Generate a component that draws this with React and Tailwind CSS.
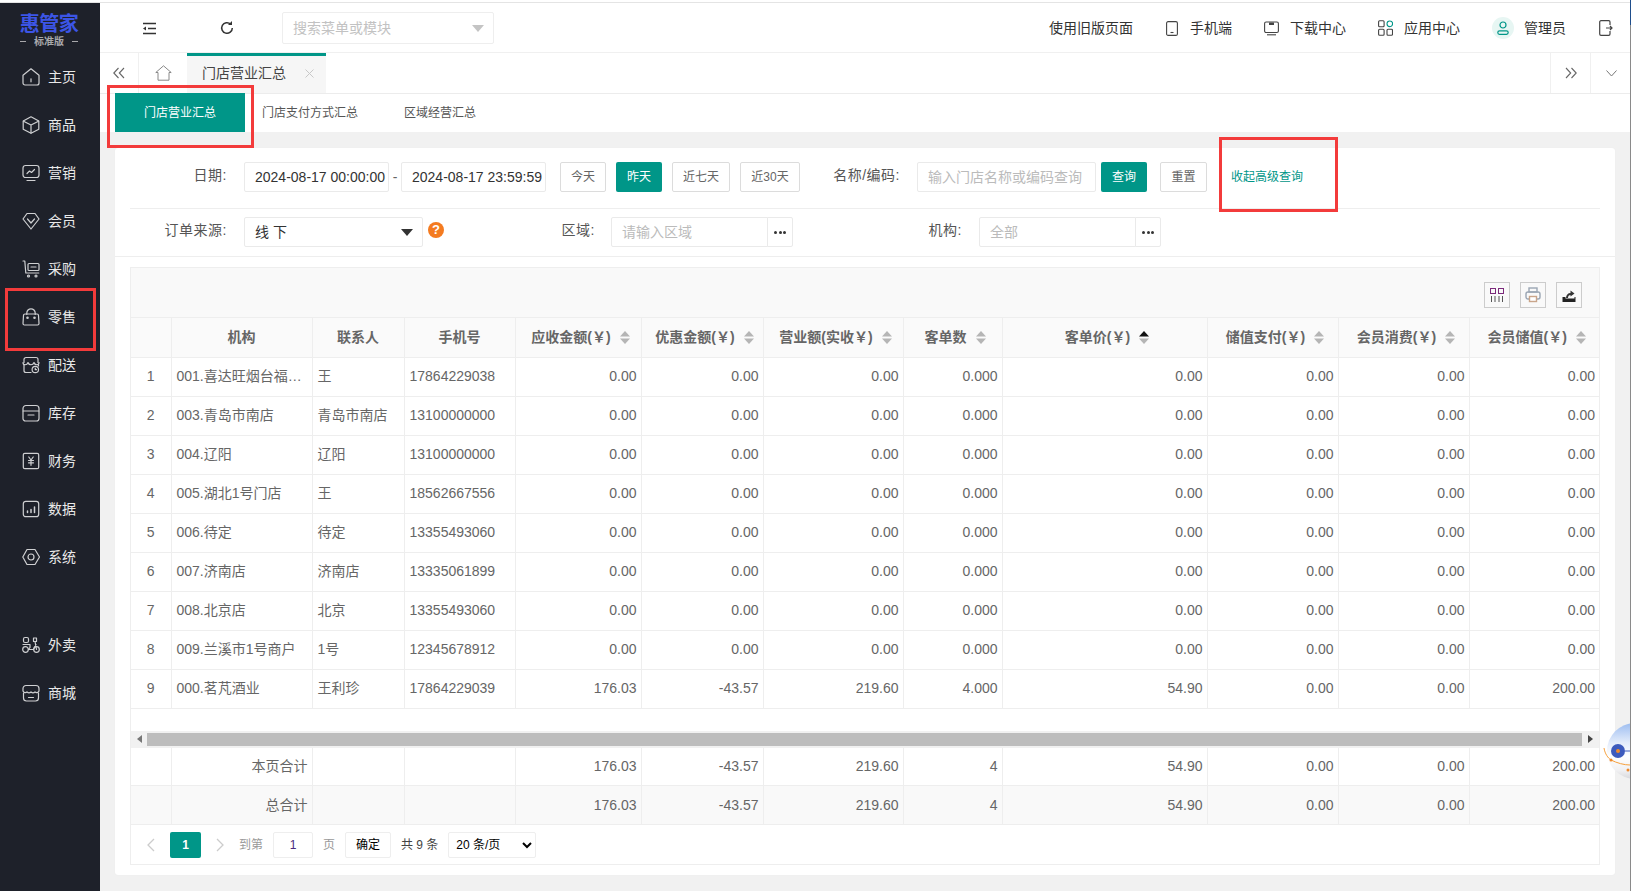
import React from "react";

const s = { fill: "none", stroke: "currentColor", strokeWidth: 1.2, strokeLinecap: "round", strokeLinejoin: "round" };
const Ic = ({ size = 18, vb = 18, className = "", children }) => (
  <svg width={size} height={size} viewBox={`0 0 ${vb} ${vb}`} className={className} {...s}>{children}</svg>
);

const navIcons = {
  home: <><path d="M1 7.300 9 .8l8 6.500v7.700a2 2 0 0 1-2 2H3a2 2 0 0 1-2-2z" /><path d="M9 10.800v3" /></>,
  box: <><path d="M9 .8 16.800 5v8.200L9 17.300 1.200 13.200V5z" /><path d="M1.500 5.200 9 9l7.500-3.800M9 9v8" /></>,
  chart: <><rect x="1" y="1.500" width="16" height="12" rx="2.500" /><path d="m5 9.500 2.500-2.500 2 1.500 3-3M5 16.500h8" /></>,
  member: <><path d="M5 1.500h8l4 5.500-8 10L1 7z" /><path d="m5.500 7 3.500 4 3.500-4" /></>,
  cart: <><path d="M1 1h1.800l1 12h13" /><rect x="6" y="3.500" width="11" height="7" rx="1" /><path d="M9 7h5" /><circle cx="6.500" cy="16" r="1" /><circle cx="14" cy="16" r="1" /></>,
  bag: <><path d="M3 6h12a1.500 1.500 0 0 1 1.500 1.500l.5 8a1.500 1.500 0 0 1-1.500 1.500h-13A1.500 1.500 0 0 1 1 15.500l.5-8A1.500 1.500 0 0 1 3 6z" /><path d="M4.800 6.500V5a4.200 4.200 0 0 1 8.400 0v1.500" /><circle cx="5.500" cy="9.800" r=".7" /><circle cx="12.500" cy="9.800" r=".7" /></>,
  ship: <><path d="M2 6.500V3.500A2 2 0 0 1 4 1.500h10a2 2 0 0 1 2 2v3" /><path d="M1 6.500c0 3 4 3 5 0 .8 3 5 3 6 0 .8 3 5 3 5 0" /><path d="M2 9v5.500a2 2 0 0 0 2 2h5" /><path d="M16.500 9v1" /><circle cx="13.300" cy="13.500" r="3.200" /><path d="M13.300 12.200v1.500h1.200" /></>,
  stock: <><path d="M4 1.500h10a3 3 0 0 1 3 3v10a2.500 2.500 0 0 1-2.500 2.500h-11A2.500 2.500 0 0 1 1 14.500v-10a3 3 0 0 1 3-3z" /><path d="M1.200 7h15.600M6 11h6" /></>,
  money: <><rect x="1.300" y="1.300" width="15.400" height="15.400" rx="1.500" /><path d="m6.800 5 2.200 3 2.200-3M6.500 8.500h5M6.500 10.800h5M9 8.300v5" /></>,
  data: <><rect x="1.300" y="1.300" width="15.400" height="15.400" rx="2.500" /><path d="M5.500 12.500v-1.500M9 12.500V9.500M12.500 12.500V7" strokeWidth="1.500" /></>,
  sys: <><path d="M5 1.500h8l4.500 7.500-4.500 7.500H5L.8 9z" /><circle cx="9" cy="9" r="3" /></>,
  bike: <><circle cx="3.500" cy="13.500" r="2.800" /><circle cx="14.500" cy="13.500" r="2.800" /><rect x="1.500" y="1.500" width="5" height="5" rx="1.500" /><path d="M1 8.500h7v3l-1.500 2h5l2.500-5M11.500 2h3v3.500h-3zM13 5.500l1.500 8" /></>,
  mall: <><path d="M4 1.500h10a3 3 0 0 1 3 3V7a2.500 2.500 0 0 1-4 1 3 3 0 0 1-4 0 3 3 0 0 1-4 0 2.500 2.500 0 0 1-4-1V4.500a3 3 0 0 1 3-3z" /><path d="M1.500 9v5a3 3 0 0 0 3 3h9a3 3 0 0 0 3-3V9M6.500 13.500h5" /></>,
};

const NavItem = ({ icon, label }) => (
  <div className="h-12 flex items-center pl-[22px] text-[14px] text-[#e9e9e9] shrink-0">
    <span className="w-[26px] text-[#cfd0d2] flex"><Ic>{navIcons[icon]}</Ic></span>
    <span>{label}</span>
  </div>
);

const Sort = ({ up }) => (
  <svg width="10" height="13" viewBox="0 0 10 13" className="shrink-0">
    <path d="M5 0 10 5.500H0z" fill={up ? "#111" : "#b5b5b5"} />
    <path d="M5 13 0 7.500h10z" fill="#b5b5b5" />
  </svg>
);

const rows = [
  ["1", "001.喜达旺烟台福…", "王", "17864229038", "0.00", "0.00", "0.00", "0.000", "0.00", "0.00", "0.00", "0.00"],
  ["2", "003.青岛市南店", "青岛市南店", "13100000000", "0.00", "0.00", "0.00", "0.000", "0.00", "0.00", "0.00", "0.00"],
  ["3", "004.辽阳", "辽阳", "13100000000", "0.00", "0.00", "0.00", "0.000", "0.00", "0.00", "0.00", "0.00"],
  ["4", "005.湖北1号门店", "王", "18562667556", "0.00", "0.00", "0.00", "0.000", "0.00", "0.00", "0.00", "0.00"],
  ["5", "006.待定", "待定", "13355493060", "0.00", "0.00", "0.00", "0.000", "0.00", "0.00", "0.00", "0.00"],
  ["6", "007.济南店", "济南店", "13335061899", "0.00", "0.00", "0.00", "0.000", "0.00", "0.00", "0.00", "0.00"],
  ["7", "008.北京店", "北京", "13355493060", "0.00", "0.00", "0.00", "0.000", "0.00", "0.00", "0.00", "0.00"],
  ["8", "009.兰溪市1号商户", "1号", "12345678912", "0.00", "0.00", "0.00", "0.000", "0.00", "0.00", "0.00", "0.00"],
  ["9", "000.茗芃酒业", "王利珍", "17864229039", "176.03", "-43.57", "219.60", "4.000", "54.90", "0.00", "0.00", "200.00"],
];

const heads = [
  ["", false], ["机构", false], ["联系人", false], ["手机号", false],
  ["应收金额(￥)", true], ["优惠金额(￥)", true], ["营业额(实收￥)", true], ["客单数", true],
  ["客单价(￥)", "up"], ["储值支付(￥)", true], ["会员消费(￥)", true], ["会员储值(￥)", true],
];

const Cols = () => (
  <colgroup>
    <col className="w-[40px]" /><col className="w-[141px]" /><col className="w-[92px]" /><col className="w-[111px]" />
    <col className="w-[126px]" /><col className="w-[122px]" /><col className="w-[140px]" /><col className="w-[99px]" />
    <col className="w-[205px]" /><col className="w-[131px]" /><col className="w-[131px]" /><col className="w-[130px]" />
  </colgroup>
);

const Btn = ({ w, children, active }) => (
  <div className={`${w} h-[30px] shrink-0 flex items-center justify-center rounded-[2px] text-[12px] ${active ? "bg-[#009688] text-white" : "border border-[#dcdcdc] text-[#666] bg-white"}`}>
    {children}
  </div>
);

const Field = ({ w, children, muted }) => (
  <div className={`${w} h-[30px] shrink-0 flex items-center pl-[10px] border border-[#eaeaea] rounded-[2px] text-[14px] bg-white ${muted ? "text-[#bbb]" : "text-[#333]"}`}>
    {children}
  </div>
);

const Label = ({ w, children }) => (
  <div className={`${w} h-[26px] flex items-center justify-end text-[#555] whitespace-nowrap tracking-[0.5px]`}>{children}</div>
);

const Dots = () => (
  <div className="w-[26px] h-[30px] -ml-px shrink-0 flex items-center justify-center border border-[#eaeaea] rounded-r-[2px] bg-white gap-[1.500px]">
    <i className="w-[3px] h-[3px] rounded-full bg-[#333]" /><i className="w-[3px] h-[3px] rounded-full bg-[#333]" /><i className="w-[3px] h-[3px] rounded-full bg-[#333]" />
  </div>
);

const Tool = ({ children }) => (
  <div className="w-[26px] h-[26px] border border-[#ccc] flex items-center justify-center">{children}</div>
);

export default function App() {
  return (
    <div className="relative w-[1631px] h-[891px] overflow-hidden bg-white font-['Liberation_Sans','Noto_Sans_CJK_SC',sans-serif]">
      <div className="h-[3px] border-b border-[#e4e4e4] bg-white" />
      <div className="flex h-[888px]">
        {/* Sidebar */}
        <aside className="w-[100px] shrink-0 bg-[#1e212a] flex flex-col">
          <div className="h-[50px] flex flex-col items-center pt-[10px] pr-[2px]">
            <div className="text-[20px] leading-[22px] font-bold text-[#3c55e6] tracking-[-0.5px]">惠管家</div>
            <div className="flex items-center gap-[8px] text-[10px] leading-[13px] text-[#a8a8ab] font-bold">
              <i className="w-[6px] h-px bg-[#a8a8ab]" />标准版<i className="w-[6px] h-px bg-[#a8a8ab]" />
            </div>
          </div>
          <NavItem icon="home" label="主页" />
          <NavItem icon="box" label="商品" />
          <NavItem icon="chart" label="营销" />
          <NavItem icon="member" label="会员" />
          <NavItem icon="cart" label="采购" />
          <NavItem icon="bag" label="零售" />
          <NavItem icon="ship" label="配送" />
          <NavItem icon="stock" label="库存" />
          <NavItem icon="money" label="财务" />
          <NavItem icon="data" label="数据" />
          <NavItem icon="sys" label="系统" />
          <div className="h-10" />
          <NavItem icon="bike" label="外卖" />
          <NavItem icon="mall" label="商城" />
        </aside>

        <main className="flex-1 min-w-0 flex flex-col bg-[#f1f1f1]">
          {/* Top bar */}
          <header className="h-[50px] shrink-0 bg-white border-b border-[#f0f0f0] pt-px flex items-center text-[14px] text-[#333]">
            <span className="ml-[42px] w-[16px] flex text-[#333]">
              <svg width="15" height="13" viewBox="0 0 15 13" fill="none" stroke="currentColor" strokeWidth="1.300"><path d="M1 1.500h13M6 6.500h8M1 11.500h13" /><path d="M4 4.500 1 6.500l3 2z" fill="currentColor" stroke="none" /></svg>
            </span>
            <span className="ml-[62px] w-[14px] flex text-[#333]">
              <svg width="14" height="14" viewBox="0 0 14 14" fill="none" stroke="currentColor" strokeWidth="1.500"><path d="M12.300 7a5.300 5.300 0 1 1-1.700-3.900" /><path d="M12 0v4H8z" fill="currentColor" stroke="none" /></svg>
            </span>
            <div className="ml-[48px] w-[212px] h-[32px] border border-[#eee] rounded-[2px] flex items-center pl-[10px] pr-[9px] text-[#c2c2c2] justify-between">
              <span>搜索菜单或模块</span>
              <svg width="12" height="7" viewBox="0 0 12 7"><path d="M0 0h12L6 7z" fill="#c4c4c4" /></svg>
            </div>
            <span className="ml-[555px] w-[84px] whitespace-nowrap">使用旧版页面</span>
            <span className="ml-[33px] w-[12px] flex text-[#444]">
              <svg width="12" height="15" viewBox="0 0 12 15" fill="none" stroke="currentColor" strokeWidth="1.100"><rect x=".6" y=".6" width="10.800" height="13.800" rx="1.500" /><path d="M4.500 11.500h3" /></svg>
            </span>
            <span className="ml-[12px] w-[42px]">手机端</span>
            <span className="ml-[32px] w-[15px] flex text-[#444]">
              <svg width="15" height="15" viewBox="0 0 15 15" fill="none" stroke="currentColor" strokeWidth="1.100"><rect x=".6" y="1" width="13.800" height="10.500" rx="1.500" /><path d="M3 13.800h9" /><path d="M5 1.500h5v2.500H5z" fill="currentColor" stroke="none" /></svg>
            </span>
            <span className="ml-[11px] w-[56px]">下载中心</span>
            <span className="ml-[32px] w-[15px] flex text-[#444]">
              <svg width="15" height="16" viewBox="0 0 15 16" fill="none" stroke="currentColor" strokeWidth="1.100"><rect x=".6" y=".8" width="5.500" height="6" rx="1" /><rect x=".6" y="9.200" width="5.500" height="6" rx="1" /><rect x="9" y="9.200" width="5.500" height="6" rx="1" /><circle cx="11.800" cy="3.800" r="2.800" stroke="#009688" /></svg>
            </span>
            <span className="ml-[11px] w-[56px]">应用中心</span>
            <span className="ml-[32px] w-[22px] h-[22px] rounded-full bg-[#e7f6f3] flex items-center justify-center">
              <svg width="12" height="14" viewBox="0 0 12 14" fill="none" stroke="#009688" strokeWidth="1.200"><circle cx="6" cy="4" r="3" /><rect x=".8" y="9.800" width="10.400" height="3.500" rx="1.700" /></svg>
            </span>
            <span className="ml-[10px] w-[42px]">管理员</span>
            <span className="ml-[33px] w-[14px] flex text-[#444]">
              <svg width="14" height="16" viewBox="0 0 14 16" fill="none" stroke="currentColor" strokeWidth="1.200"><path d="M11 5V2a1.300 1.300 0 0 0-1.300-1.300H2A1.300 1.300 0 0 0 .7 2v12A1.300 1.300 0 0 0 2 15.300h7.700A1.300 1.300 0 0 0 11 14v-3" /><path d="M7 8h6M11 6l2 2-2 2" /></svg>
            </span>
          </header>

          {/* Open tabs */}
          <div className="h-[41px] shrink-0 bg-white border-b border-[#ececec] flex text-[14px] text-[#555]">
            <div className="w-[39px] border-r border-[#f0f0f0] flex items-center justify-center text-[#666]">
              <svg width="12" height="12" viewBox="0 0 12 12" fill="none" stroke="currentColor" strokeWidth="1.100"><path d="M5.500 1 .8 6l4.700 5M11 1 6.300 6 11 11" /></svg>
            </div>
            <div className="w-[48px] flex items-center justify-center text-[#888]">
              <svg width="17" height="16" viewBox="0 0 17 16" fill="none" stroke="currentColor" strokeWidth="1"><path d="M.8 7.500 8.500.8l7.700 6.700h-2.200v7.700H3V7.500z" /></svg>
            </div>
            <div className="w-[139px] bg-[#f6f6f6] border-t-[3px] border-[#009688] flex items-center pl-[15px] pb-[2px]">
              <span className="w-[84px] whitespace-nowrap text-[#444]">门店营业汇总</span>
              <svg className="ml-[19px]" width="9" height="9" viewBox="0 0 9 9" stroke="#c8c8c8" strokeWidth="1"><path d="m.5.500 8 8M8.500.500l-8 8" /></svg>
            </div>
            <div className="flex-1" />
            <div className="w-[40px] border-l border-[#f0f0f0] flex items-center justify-center text-[#666]">
              <svg width="12" height="12" viewBox="0 0 12 12" fill="none" stroke="currentColor" strokeWidth="1.100"><path d="M1 1l4.700 5L1 11M6.500 1l4.700 5-4.700 5" /></svg>
            </div>
            <div className="w-[41px] border-l border-[#f0f0f0] flex items-center justify-center text-[#777]">
              <svg width="11" height="7" viewBox="0 0 11 7" fill="none" stroke="currentColor" strokeWidth="1"><path d="m.5.500 5 5.500 5-5.500" /></svg>
            </div>
          </div>

          {/* Report tabs */}
          <div className="h-[38px] shrink-0 bg-white flex pl-[15px] text-[12px] text-[#555]">
            <div className="w-[130px] h-[39px] -mt-px bg-[#009688] text-white flex items-center justify-center">门店营业汇总</div>
            <div className="ml-[17px] w-[96px] flex items-center">门店支付方式汇总</div>
            <div className="ml-[46px] w-[72px] flex items-center">区域经营汇总</div>
          </div>

          {/* Card */}
          <section className="mt-[16px] ml-[15px] mr-[16px] h-[727px] bg-white rounded-[3px] shadow-[0_0_1px_#e4e4e4]">
            <div className="mx-[15px] h-[61px] border-b border-[#eee] pt-[14px] flex items-start text-[14px]">
              <Label w="w-[97px]">日期:</Label>
              <Field w="w-[145px] ml-[17px]">2024-08-17 00:00:00</Field>
              <div className="w-[12px] h-[30px] flex items-center justify-center text-[#666]">-</div>
              <Field w="w-[145px]">2024-08-17 23:59:59</Field>
              <Btn w="w-[46px] ml-[14px]">今天</Btn>
              <Btn w="w-[46px] ml-[10px]" active>昨天</Btn>
              <Btn w="w-[58px] ml-[10px]">近七天</Btn>
              <Btn w="w-[60px] ml-[10px]">近30天</Btn>
              <Label w="w-[100px]">名称/编码:</Label>
              <Field w="w-[179px] ml-[17px]" muted>输入门店名称或编码查询</Field>
              <Btn w="w-[46px] ml-[5px]" active>查询</Btn>
              <Btn w="w-[47px] ml-[13px]">重置</Btn>
              <div className="ml-[24px] h-[30px] flex items-center text-[12px] text-[#009688]">收起高级查询</div>
            </div>
            <div className="h-[48px] border-b border-[#eee] pl-[15px] pt-[8px] flex items-start text-[14px]">
              <Label w="w-[97px]">订单来源:</Label>
              <div className="ml-[17px] w-[179px] h-[30px] border border-[#eaeaea] rounded-[2px] flex items-center justify-between pl-[10px] pr-[9px] text-[#333]">
                <span>线 下</span>
                <svg width="12" height="7" viewBox="0 0 12 7"><path d="M0 0h12L6 7z" fill="#333" /></svg>
              </div>
              <div className="ml-[5px] mt-[5px] w-[16px] h-[16px] rounded-full bg-[#f47b20] text-white text-[13px] font-bold flex items-center justify-center">?</div>
              <Label w="ml-[117px] w-[34px]">区域:</Label>
              <Field w="w-[157px] ml-[16px] rounded-r-none" muted>请输入区域</Field>
              <Dots />
              <Label w="ml-[135px] w-[34px]">机构:</Label>
              <Field w="w-[157px] ml-[17px] rounded-r-none" muted>全部</Field>
              <Dots />
            </div>

            {/* Table panel */}
            <div className="mx-[15px] mt-[10px] h-[598px] border border-[#eee] flex flex-col">
              <div className="h-[50px] shrink-0 bg-[#f9f9f9] border-b border-[#eee] flex items-start pt-[14px] pl-[1353px] gap-[10px]">
                <Tool>
                  <svg width="16" height="16" viewBox="0 0 16 16" fill="none" stroke="#7b2a7b" strokeWidth="1"><rect x="1.500" y="1.500" width="5" height="5" /><rect x="9.500" y="1.500" width="5" height="5" /><path d="M2.500 9v6M6 9v6M10 9v6M13.500 9v6" stroke="#555" /></svg>
                </Tool>
                <Tool>
                  <svg width="16" height="16" viewBox="0 0 16 16" fill="none" stroke="#9ba6b4" strokeWidth="1.400"><rect x="4" y="1" width="8" height="4" /><rect x="1" y="5" width="14" height="7" rx="2" /><rect x="4.500" y="9.500" width="7" height="5" fill="#fff" stroke="#c9a58a" /></svg>
                </Tool>
                <Tool>
                  <svg width="16" height="16" viewBox="0 0 16 16"><path d="M1.500 15V10h3v1.500h9V10h1v5z" fill="#222" /><path d="M5 11c0-3 2-5 4.500-5V3.500l4 3-4 3V8C8 8 7 9 7 11z" fill="#333" /></svg>
                </Tool>
              </div>
              <table className="w-[1468px] table-fixed border-collapse text-[14px] text-[#666]">
                <Cols />
                <thead>
                  <tr className="h-[39px] bg-[#fafafa] text-[#666]">
                    {heads.map(([t, sort], i) => (
                      <th key={i} className={`p-0 font-bold border-b border-[#eee] ${i < 11 ? "border-r" : ""} border-r-[#eee]`}>
                        <div className={`flex items-center justify-center gap-[9px] whitespace-nowrap ${sort ? "pl-[5px]" : ""}`}>
                          <span>{t}</span>
                          {sort && <Sort up={sort === "up"} />}
                        </div>
                      </th>
                    ))}
                  </tr>
                </thead>
                <tbody>
                  {rows.map((r) => (
                    <tr key={r[0]} className="h-[39px]">
                      {r.map((c, i) => (
                        <td key={i} className={`p-0 border-b border-[#eee] whitespace-nowrap ${i < 11 ? "border-r border-r-[#eee]" : ""} ${i === 0 ? "text-center" : i < 4 ? "text-left pl-[5px]" : "text-right pr-[4px]"}`}>
                          {c}
                        </td>
                      ))}
                    </tr>
                  ))}
                </tbody>
              </table>
              <div className="h-[22px] shrink-0" />
              <div className="h-[17px] shrink-0 bg-[#f1f1f1] flex items-center">
                <div className="w-[16px] flex justify-center"><svg width="5" height="8" viewBox="0 0 5 8"><path d="M5 0v8L0 4z" fill="#777" /></svg></div>
                <div className="flex-1 h-[13px] bg-[#bdbdbd]" />
                <div className="w-[17px] flex justify-center"><svg width="5" height="8" viewBox="0 0 5 8"><path d="M0 0v8l5-4z" fill="#444" /></svg></div>
              </div>
              <table className="w-[1468px] table-fixed border-collapse text-[14px] text-[#666]">
                <Cols />
                <tbody>
                  {[["本页合计", "h-[38px]"], ["总合计", "h-[39px] bg-[#f9f9f9]"]].map(([t, cls]) => (
                    <tr key={t} className={cls}>
                      {["", t, "", "", "176.03", "-43.57", "219.60", "4", "54.90", "0.00", "0.00", "200.00"].map((c, i) => (
                        <td key={i} className={`p-0 pr-[4px] text-right border-b border-[#eee] ${i < 11 ? "border-r border-r-[#eee]" : ""}`}>{c}</td>
                      ))}
                    </tr>
                  ))}
                </tbody>
              </table>
              <div className="flex-1 flex items-center text-[12px] text-[#999]">
                <svg className="ml-[16px]" width="8" height="14" viewBox="0 0 8 14" fill="none" stroke="#ccc" strokeWidth="1.300"><path d="M7 1 1 7l6 6" /></svg>
                <div className="ml-[15px] w-[31px] h-[26px] bg-[#009688] rounded-[2px] text-white font-bold flex items-center justify-center">1</div>
                <svg className="ml-[15px]" width="8" height="14" viewBox="0 0 8 14" fill="none" stroke="#ccc" strokeWidth="1.300"><path d="m1 1 6 6-6 6" /></svg>
                <span className="ml-[15px] w-[24px]">到第</span>
                <div className="ml-[10px] w-[40px] h-[26px] border border-[#eee] rounded-[2px] flex items-center justify-center text-[#4a2a80]">1</div>
                <span className="ml-[10px] w-[12px]">页</span>
                <div className="ml-[10px] w-[46px] h-[26px] border border-[#eee] rounded-[2px] flex items-center justify-center text-black">确定</div>
                <span className="ml-[10px] text-[#444] whitespace-nowrap">共 9 条</span>
                <select defaultValue="20" className="ml-[10px] w-[88px] h-[26px] border border-[#eee] rounded-[2px] pl-[3px] text-[12px] text-black bg-white">
                  <option value="20">20 条/页</option>
                </select>
              </div>
            </div>
          </section>
        </main>
      </div>

      {/* Window edge */}
      <div className="absolute right-0 top-0 w-px h-full bg-[#8a8a8a]" />
      <div className="absolute right-0 top-0 w-px h-[25px] bg-[#1f4e8c]" />

      {/* Annotation boxes over the screenshot */}
      <div className="absolute left-[5px] top-[288px] w-[91px] h-[63px] border-[3px] border-[#f33b3b]" />
      <div className="absolute left-[107px] top-[85px] w-[147px] h-[63px] border-[3px] border-[#f33b3b]" />
      <div className="absolute left-[1219px] top-[137px] w-[119px] h-[75px] border-[3px] border-[#f33b3b]" />

      {/* Floating assistant ball */}
      <svg className="absolute left-[1603px] top-[721px]" width="27" height="60" viewBox="0 0 27 60" fill="none">
        <defs>
          <linearGradient id="ballg" x1="0" y1="0" x2="0" y2="1">
            <stop offset="0" stopColor="#9dbdf0" />
            <stop offset="0.350" stopColor="#e3ecfb" />
            <stop offset="0.600" stopColor="#ffffff" />
            <stop offset="0.850" stopColor="#f0f0f2" />
            <stop offset="1" stopColor="#d8d8dc" />
          </linearGradient>
        </defs>
        <circle cx="32" cy="30" r="28" fill="url(#ballg)" />
        <circle cx="15" cy="30" r="7" fill="#3d5bbd" />
        <circle cx="15" cy="30" r="2" fill="#f08a2c" />
        <path d="M22 30h5" stroke="#3d5bbd" strokeWidth="1" />
        <path d="M1 27c1 6 4 10 7 12 6 3 13 5 19 5" stroke="#f6a03c" strokeWidth="1" />
        <circle cx="8" cy="39" r="1.500" fill="#f08a2c" />
        <circle cx="25" cy="49" r="1.500" fill="#f08a2c" />
      </svg>
    </div>
  );
}
